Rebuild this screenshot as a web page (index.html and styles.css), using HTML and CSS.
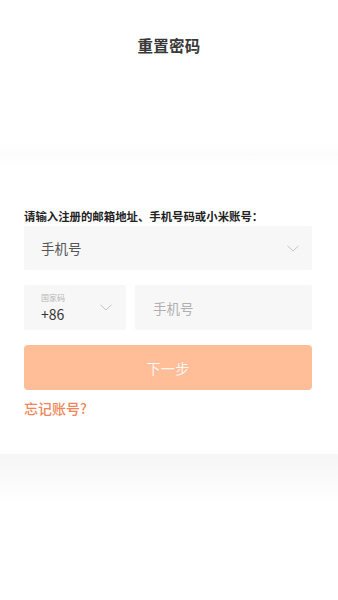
FILE: index.html
```html
<!DOCTYPE html>
<html lang="zh-CN">
<head>
<meta charset="utf-8">
<meta name="viewport" content="width=device-width, initial-scale=1">
<title>重置密码</title>
<link rel="stylesheet" href="styles.css">
</head>
<body>
<div class="page">
  <header class="header">
    <h1 class="title">重置密码</h1>
  </header>
  <div class="spacer">
    <div class="fade-top"></div>
  </div>
  <main class="form">
    <div class="label">请输入注册的邮箱地址、手机号码或小米账号：</div>
    <div class="select">
      <span class="select-text">手机号</span>
      <svg class="chev" width="12" height="7" viewBox="0 0 12 7"><path d="M0.5 0.8 L6 6 L11.5 0.8" fill="none" stroke="#c4c4c4" stroke-width="1"/></svg>
    </div>
    <div class="row">
      <div class="country">
        <div class="country-info">
          <span class="country-label">国家码</span>
          <span class="country-code">+86</span>
        </div>
        <svg class="chev" width="12" height="7" viewBox="0 0 12 7"><path d="M0.5 0.8 L6 6 L11.5 0.8" fill="none" stroke="#c4c4c4" stroke-width="1"/></svg>
      </div>
      <div class="phone">手机号</div>
    </div>
    <button class="next">下一步</button>
    <a class="forgot">忘记账号?</a>
  </main>
  <div class="fade-bottom"></div>
</div>
</body>
</html>
```

FILE: styles.css
```css
html, body {
  margin: 0;
  padding: 0;
  background: #ffffff;
}
body {
  font-family: "Noto Sans CJK SC", "Noto Sans", sans-serif;
  color: #333;
}
.page {
  width: 338px;
  height: 600px;
  overflow: hidden;
}
.header {
  height: 90px;
  display: flex;
  align-items: center;
  justify-content: center;
}
.title {
  margin: 0;
  font-size: 15.5px;
  font-weight: 700;
  color: #383838;
  line-height: 20px;
  letter-spacing: 0.2px;
}
.spacer {
  height: 118px;
  padding-top: 52px;
  box-sizing: border-box;
}
.fade-top {
  height: 26px;
  background: linear-gradient(to bottom, #ffffff, #fcfcfc 50%, #ffffff);
}
.form {
  padding: 0 26px 0 24px;
  display: flex;
  flex-direction: column;
}
.label {
  font-size: 11.4px;
  line-height: 16px;
  height: 16px;
  font-weight: 700;
  color: #222;
  white-space: nowrap;
}
.select {
  margin-top: 2px;
  height: 44px;
  background: #f7f7f7;
  display: flex;
  align-items: center;
  justify-content: space-between;
  padding: 0 13px 0 17px;
  border-radius: 2px;
}
.select-text {
  font-size: 13.5px;
  color: #555;
}
.row {
  margin-top: 15px;
  height: 45px;
  display: flex;
  gap: 9px;
}
.country {
  width: 102px;
  background: #f7f7f7;
  border-radius: 2px;
  display: flex;
  align-items: center;
  justify-content: space-between;
  padding: 0 14px 0 17px;
  box-sizing: border-box;
}
.country-info {
  display: flex;
  flex-direction: column;
}
.country-label {
  font-size: 8px;
  line-height: 10px;
  color: #b5b5b5;
  margin-bottom: 2px;
}
.country-code {
  font-size: 14px;
  line-height: 18px;
  color: #333;
}
.phone {
  flex: 1;
  background: #f7f7f7;
  border-radius: 2px;
  display: flex;
  align-items: center;
  padding-left: 18px;
  font-size: 13.5px;
  color: #b0b0b0;
}
.next {
  margin-top: 15px;
  height: 45px;
  border: none;
  border-radius: 4px;
  background: #ffbd98;
  color: #fff6f0;
  font-family: inherit;
  font-size: 14px;
  letter-spacing: 0.3px;
  padding: 0;
}
.forgot {
  margin-top: 8px;
  font-size: 14px;
  line-height: 20px;
  color: #ef8659;
  font-weight: 500;
}
.fade-bottom {
  margin-top: 36px;
  height: 50px;
  background: linear-gradient(to bottom, #f6f6f6, #fafafa 50%, #ffffff);
}
```
